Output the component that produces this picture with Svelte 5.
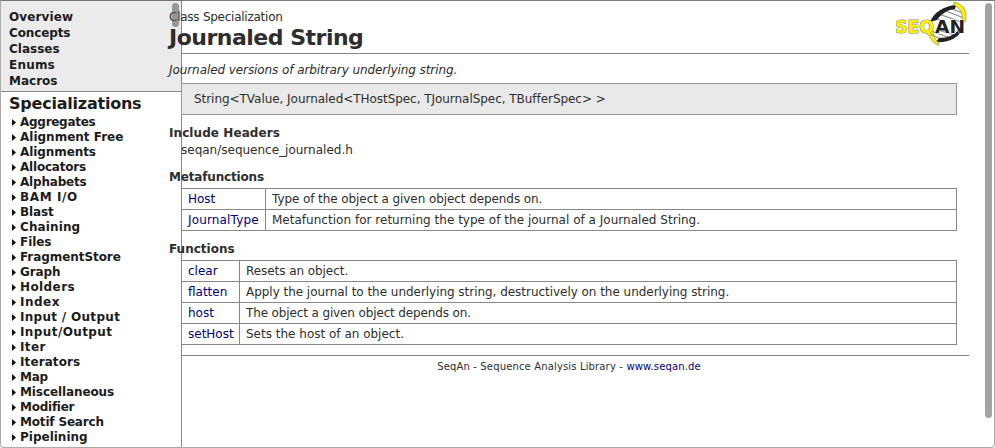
<script>
  const sections = [['Overview', 0.12], ['Concepts', -0.12], ['Classes', 0], ['Enums', 0.2], ['Macros', 0]];
  // label, letter spacing in px
  const groups = [
    ['Aggregates', -0.28], ['Alignment Free', 0], ['Alignments', -0.08], ['Allocators', -0.2],
    ['Alphabets', -0.2], ['BAM I/O', 0.6], ['Blast', -0.1], ['Chaining', 0.12], ['Files', -0.05],
    ['FragmentStore', -0.07], ['Graph', -0.1], ['Holders', 0.4], ['Index', 0.5],
    ['Input / Output', 0.3], ['Input/Output', 0.4], ['Iter', 0.4], ['Iterators', 0.1], ['Map', -0.3],
    ['Miscellaneous', -0.1], ['Modifier', -0.25], ['Motif Search', -0.17], ['Pipelining', 0]
  ];
  const metafunctions = [
    ['Host', 'Type of the object a given object depends on.', -0.08],
    ['JournalType', 'Metafunction for returning the type of the journal of a Journaled String.', 0.02]
  ];
  const functions = [
    ['clear', 'Resets an object.', -0.06],
    ['flatten', 'Apply the journal to the underlying string, destructively on the underlying string.', -0.035],
    ['host', 'The object a given object depends on.', -0.13],
    ['setHost', 'Sets the host of an object.', 0]
  ];
</script>

<div class="window">
  <aside>
    <nav class="top">
      {#each sections as [item, gap]}<a href="#top" style="letter-spacing: {gap}px">{item}</a>{/each}
    </nav>
    <h2>Specializations</h2>
    <ul>
      {#each groups as [item, gap]}
        <li><svg width="4" height="7" viewBox="0 0 4 7"><path d="M0 0L4 3.5L0 7Z" fill="#111" /></svg><span style="letter-spacing: {gap}px">{item}</span></li>
      {/each}
    </ul>
  </aside>

  <main>
    <header>
      <div>
        <div class="kind">Class Specialization</div>
        <h1>Journaled String</h1>
      </div>
      <svg class="logo" width="72" height="47" viewBox="0 0 72 47">
        <g stroke="#888" stroke-width="1.2">
          <path d="M53 7L67 12M47 9L68 17M43 13L68 22M39 17L45 19M37 31L58 38M35 34L51 40M45 30L62 35" />
        </g>
        <path d="M34 21C38 11 48 5 60 4L59 8C51 9 45 13 41 19Z" fill="#222" />
        <path d="M67 28C62 37 52 42 40 41L43 37C52 37 59 34 63 28Z" fill="#222" />
        <path d="M58 1C68 3 72 11 69 21L66 19C67 13 64 7 58 4Z" fill="#fff200" stroke="#777" stroke-width=".6" />
        <path d="M33 29C33 37 36 42 43 44L41 40C38 37 37 34 38 30Z" fill="#fff200" stroke="#777" stroke-width=".6" />
        <text class="yellow" x="-1" y="32" textLength="39" lengthAdjust="spacingAndGlyphs">SEQ</text>
        <text class="dark" x="39" y="32" textLength="30" lengthAdjust="spacingAndGlyphs">AN</text>
      </svg>
    </header>
    <p class="summary">Journaled versions of arbitrary underlying string.</p>
    <div class="signature">String&lt;TValue, Journaled&lt;THostSpec, TJournalSpec, TBufferSpec&gt; &gt;</div>
    <h3 class="include">Include Headers</h3>
    <div class="file">seqan/sequence_journaled.h</div>
    <h3 class="meta">Metafunctions</h3>
    <div class="table wide">
      {#each metafunctions as [name, text, gap]}
        <div class="row"><a href="#top">{name}</a><span style="letter-spacing: {gap}px">{text}</span></div>
      {/each}
    </div>
    <h3 class="func">Functions</h3>
    <div class="table">
      {#each functions as [name, text, gap]}
        <div class="row"><a href="#top">{name}</a><span style="letter-spacing: {gap}px">{text}</span></div>
      {/each}
    </div>
    <footer>SeqAn - Sequence Analysis Library - <a href="#top">www.seqan.de</a></footer>
  </main>
  <i class="thumb side"></i>
  <i class="thumb page"></i>
</div>

<style>
  :global(body) { margin: 0; background: #fff; }
  .window {
    position: relative;
    box-sizing: border-box;
    display: flex;
    width: 995px;
    height: 448px;
    overflow: hidden;
    border: 1px solid #aaa;
    border-top-color: #777;
    border-radius: 0 0 4px 4px;
    background: #fff;
    color: #2e2e2e;
    font: 12px/16px Verdana, "DejaVu Sans", sans-serif;
  }
  a { color: #000080; text-decoration: none; }
  h1, h2, h3, p, ul { margin: 0; padding: 0; }
  aside {
    box-sizing: border-box;
    flex: 0 0 181px;
    border-right: 1px solid #888;
    color: #1c1c1c;
    font-weight: bold;
    overflow: hidden;
  }
  .top {
    display: flex;
    flex-direction: column;
    box-sizing: border-box;
    height: 91px;
    padding: 8px 0 0 8px;
    border-bottom: 1px solid #888;
    background: #ebebeb;
  }
  .top a { color: inherit; }
  h2 { padding-left: 8px; font-size: 16px; line-height: 23px; letter-spacing: -0.22px; white-space: nowrap; }
  ul { list-style: none; }
  li { display: flex; align-items: center; gap: 4px; height: 15px; padding-left: 11px; line-height: 15px; white-space: nowrap; }
  li svg { flex: none; }
  main {
    position: relative;
    flex: none;
    width: 800px;
    margin-left: -13px;
    white-space: nowrap;
  }
  header {
    position: relative;
    display: flex;
    justify-content: space-between;
    height: 52px;
  }
  header::after { content: ""; position: absolute; left: 13px; right: 0; bottom: -1px; height: 1px; background: #888; }
  .kind { padding-top: 8px; letter-spacing: -0.25px; }
  h1 { font-size: 22px; line-height: 26px; letter-spacing: -0.5px; }
  .logo { margin-right: 1px; }
  .logo text { font: bold 18px "DejaVu Sans", sans-serif; paint-order: stroke; }
  .yellow { fill: #fff200; stroke: #888; stroke-width: 1.2px; }
  .dark { fill: #222; stroke: #fff; stroke-width: 1px; }
  .summary { padding-top: 9px; font-style: italic; letter-spacing: -0.08px; }
  .signature {
    box-sizing: border-box;
    width: 776px;
    height: 32px;
    margin: 5px 0 0 12px;
    padding-left: 12px;
    border: 1px solid #999;
    background: #e9e9e9;
    line-height: 30px;
    letter-spacing: -0.045px;
  }
  h3 { font-size: 12px; line-height: 16px; }
  .include { margin-top: 10px; letter-spacing: 0.08px; }
  .file { margin: 1px 0 0 12px; }
  .meta { margin-top: 11px; letter-spacing: -0.17px; }
  .table { box-sizing: border-box; width: 776px; margin: 3px 0 0 12px; border: 1px solid #888; border-bottom: 0; }
  .row { display: flex; box-sizing: border-box; height: 21px; border-bottom: 1px solid #888; line-height: 20px; }
  .row a { box-sizing: border-box; width: 58px; padding-left: 6px; border-right: 1px solid #888; }
  .wide .row a { width: 84px; }
  .wide .row:last-child a { letter-spacing: 0.15px; }
  .row span { padding-left: 6px; }
  .func { margin-top: 10px; }
  footer { margin-top: 10px; font-size: 10px; text-align: center; line-height: 22px; letter-spacing: 0.15px; }
  footer::before { content: ""; display: block; height: 1px; margin-left: 13px; background: #888; }
  .thumb { position: absolute; z-index: 2; width: 7px; border-radius: 4px; }
  .side { left: 171px; top: 2px; height: 24px; background: rgba(90, 90, 90, .58); }
  .page { left: 984px; top: 2px; height: 415px; background: #a4a4a4; }
</style>
